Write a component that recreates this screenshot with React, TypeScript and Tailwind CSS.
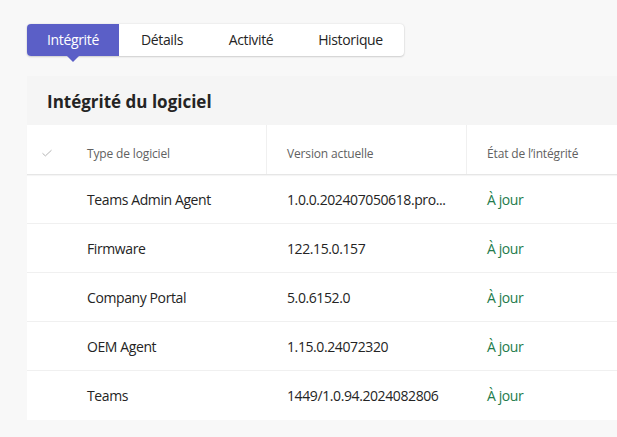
import React from "react";

const rows = [
  ["Teams Admin Agent", "1.0.0.202407050618.pro..."],
  ["Firmware", "122.15.0.157"],
  ["Company Portal", "5.0.6152.0"],
  ["OEM Agent", "1.15.0.24072320"],
  ["Teams", "1449/1.0.94.2024082806"],
];

export default function App() {
  return (
    <div
      className="w-[617px] h-[437px] overflow-hidden bg-[#f8f8f8] pl-[27px] pt-[24px]"
      style={{ fontFamily: '"Segoe UI", "Open Sans", sans-serif' }}
    >
      <div className="flex w-[377px] h-[32px] bg-white rounded-[4px] shadow-[0_1px_2px_rgba(0,0,0,0.14),0_0_2px_rgba(0,0,0,0.12)] text-[14px] tracking-[-0.35px] text-[#242424]">
        <div className="relative w-[92px] flex items-center justify-center bg-[#5b5fc7] text-white rounded-l-[4px] pb-[1px]">
          Intégrité
          <div className="absolute left-1/2 -translate-x-1/2 top-full w-0 h-0 border-l-[6px] border-r-[6px] border-t-[6px] border-l-transparent border-r-transparent border-t-[#5b5fc7]" />
        </div>
        <div className="w-[86px] flex items-center justify-center pb-[1px]">Détails</div>
        <div className="w-[92px] flex items-center justify-center pb-[1px]">Activité</div>
        <div className="flex-1 flex items-center justify-center pb-[1px]">Historique</div>
      </div>

      <div className="mt-[20px] w-[620px]">
        <div className="h-[49px] bg-[#f5f5f5] flex items-center pl-[20px] pt-[2px] text-[17px] font-bold text-[#242424]">
          Intégrité du logiciel
        </div>
        <div className="bg-white">
          <div className="flex h-[50px] items-center text-[12px] tracking-[-0.15px] text-[#616161] border-b border-[#e6e6e6] shadow-[0_1px_1px_rgba(0,0,0,0.04)]">
            <div className="w-[40px] h-full flex items-center justify-center pt-[7px]">
              <svg width="12" height="12" viewBox="0 0 12 12" fill="none">
                <path d="M1.5 6.3 L4.4 8.9 L10.5 3.2" stroke="#b5b5b5" strokeWidth="1" />
              </svg>
            </div>
            <div className="w-[200px] h-full flex items-center pl-[20px] pt-[8px] border-r border-[#f0f0f0]">Type de logiciel</div>
            <div className="w-[200px] h-full flex items-center pl-[20px] pt-[8px] border-r border-[#f0f0f0]">Version actuelle</div>
            <div className="flex-1 h-full flex items-center pl-[20px] pt-[8px]">État de l’intégrité</div>
          </div>
          {rows.map(([a, b], i) => (
            <div
              key={i}
              className={`flex h-[49px] items-center text-[14px] tracking-[-0.4px] text-[#242424] ${i < rows.length - 1 ? "border-b border-[#f0f0f0]" : ""}`}
            >
              <div className="w-[40px]" />
              <div className="w-[200px] pl-[20px]">{a}</div>
              <div className="w-[200px] pl-[20px]">{b}</div>
              <div className="flex-1 pl-[20px] text-[#237b4b]">À jour</div>
            </div>
          ))}
        </div>
      </div>
    </div>
  );
}
